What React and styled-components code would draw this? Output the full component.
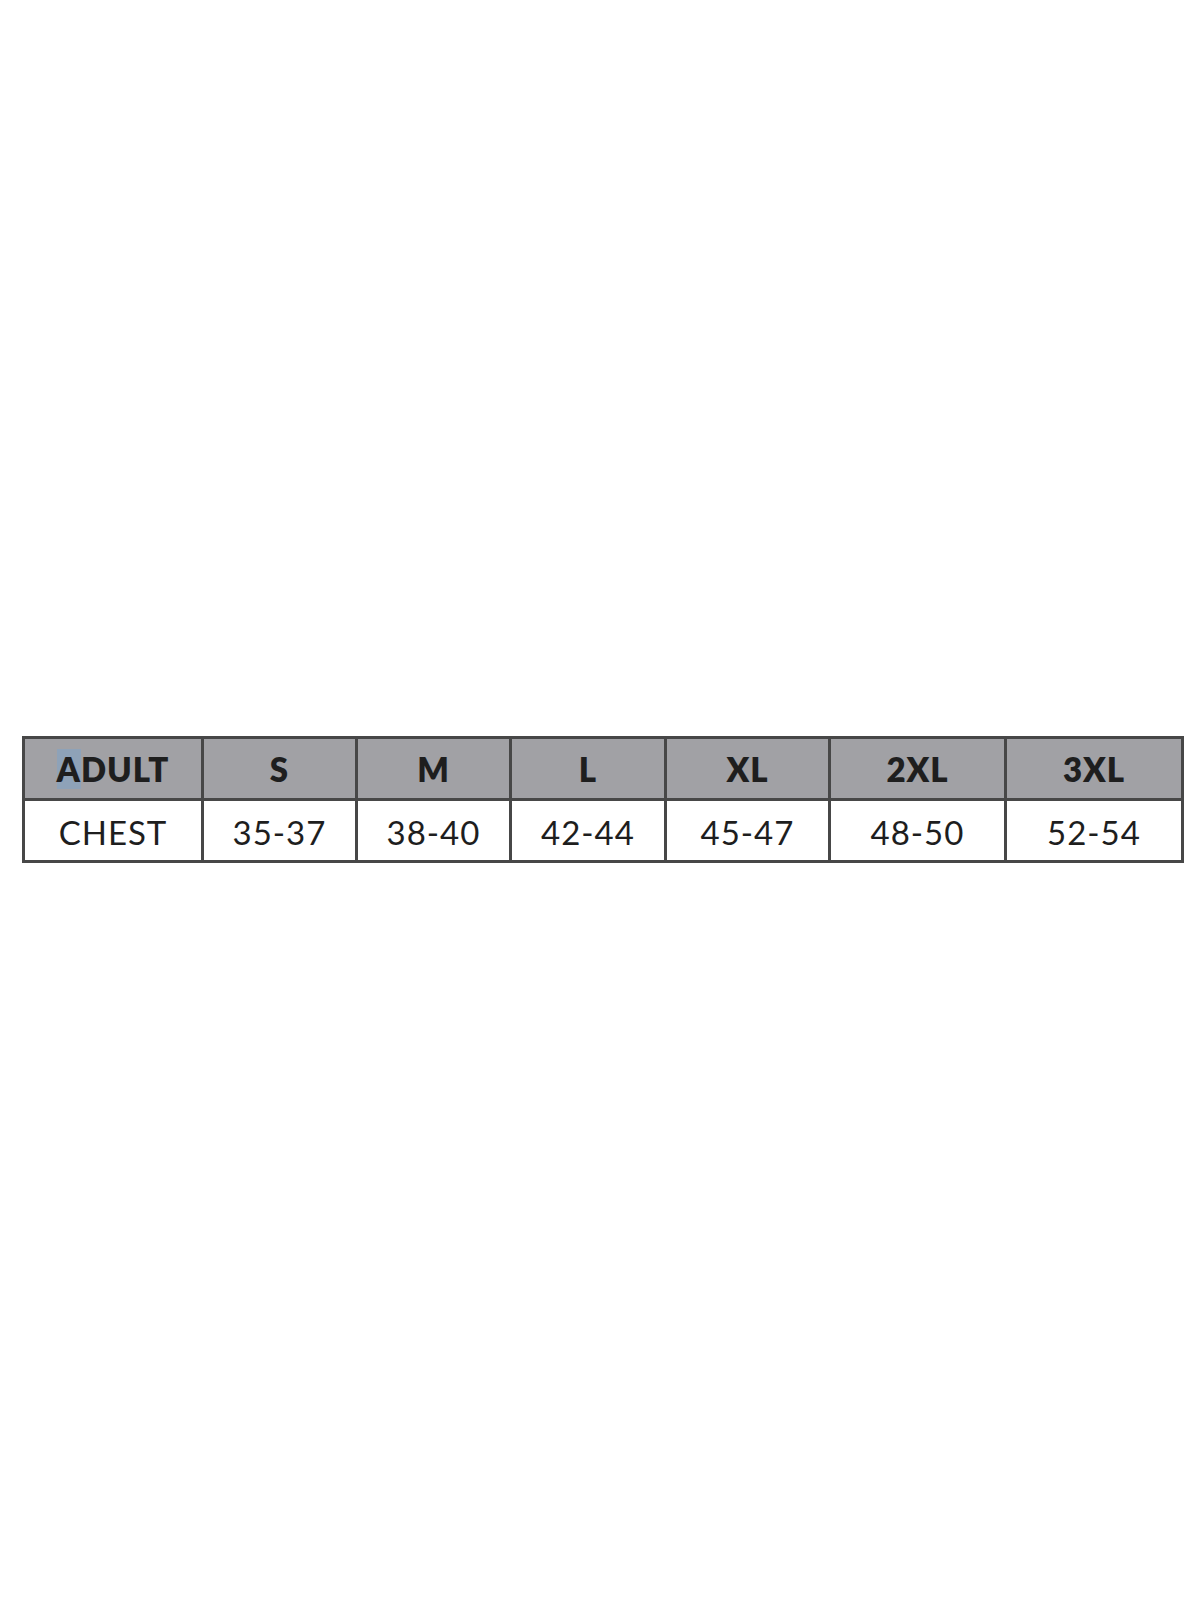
import React from "react";
import styled, { createGlobalStyle } from "styled-components";

const Global = createGlobalStyle`
  html, body { margin: 0; padding: 0; background: #ffffff; }
  body { font-family: Lato, "Open Sans", sans-serif; }
`;

const Page = styled.div`
  width: 1200px;
  height: 1600px;
  box-sizing: border-box;
  padding: 736px 0 0 22px;
  background: #fff;
`;

const Table = styled.table`
  border-collapse: collapse;
  table-layout: fixed;
  width: 1159px;
`;

const Cell = styled.td`
  border: 3px solid #474747;
  text-align: center;
  vertical-align: middle;
  padding: 0;
  color: #1e1e1e;
  font-family: Lato, sans-serif;
  font-size: 33px;
  letter-spacing: 1px;
  height: ${(p) => (p.$head ? "59px" : "57px")};
  padding-top: ${(p) => (p.$head ? "0" : "2px")};
  background: ${(p) => (p.$head ? "#a1a1a5" : "#ffffff")};
  font-weight: ${(p) => (p.$head ? 800 : 400)};
`;

const Caret = styled.span`
  background: #8ea2b8;
`;

const widths = [179, 154, 154, 155, 164, 176, 177];
const head = ["ADULT", "S", "M", "L", "XL", "2XL", "3XL"];
const body = ["CHEST", "35-37", "38-40", "42-44", "45-47", "48-50", "52-54"];

export default function App() {
  return (
    <>
      <Global />
      <Page>
        <Table>
          <colgroup>
            {widths.map((w, i) => (
              <col key={i} style={{ width: w }} />
            ))}
          </colgroup>
          <tbody>
            <tr>
              {head.map((h, i) => (
                <Cell as="th" key={h} $head>
                  {i === 0 ? (
                    <>
                      <Caret>A</Caret>DULT
                    </>
                  ) : (
                    h
                  )}
                </Cell>
              ))}
            </tr>
            <tr>
              {body.map((b) => (
                <Cell key={b}>{b}</Cell>
              ))}
            </tr>
          </tbody>
        </Table>
      </Page>
    </>
  );
}
